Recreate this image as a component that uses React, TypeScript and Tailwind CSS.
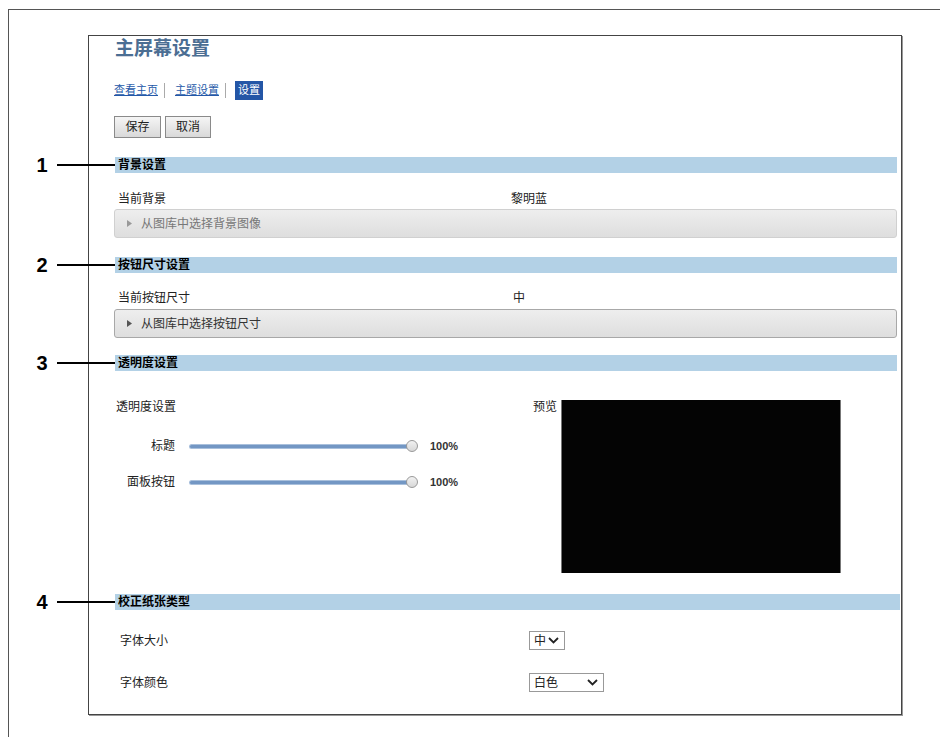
import React from "react";

function Callout({ n }: { n: string }) {
  return (
    <div className="absolute right-full top-1/2 -translate-y-1/2 flex items-center">
      <span className="w-[12px] text-center text-[20px] font-bold leading-none text-black font-['Liberation_Sans',sans-serif]">{n}</span>
      <span className="ml-[9px] w-[58px] h-[2px] bg-black" />
    </div>
  );
}

function Bar({ n, title, wide }: { n: string; title: string; wide?: boolean }) {
  return (
    <div className={`relative ml-[1px] h-[16px] bg-[#b3d1e6] pl-[3px] text-[12px] leading-[16px] font-bold text-black ${wide ? "w-[785px]" : "w-[782px]"}`}>
      <Callout n={n} />
      {title}
    </div>
  );
}

function Accordion({ text, hover }: { text: string; hover?: boolean }) {
  return (
    <div
      className={`h-[29px] w-[783px] rounded-[3px] border bg-gradient-to-b from-[#eeeeee] to-[#dedede] flex items-center pl-[12px] text-[12px] ${
        hover ? "border-[#a8a8a8] text-[#333]" : "border-[#d0d0d0] text-[#777]"
      }`}
    >
      <svg width="5" height="7" viewBox="0 0 5 7" className="mr-[9px]">
        <path d="M0 0 L5 3.5 L0 7 Z" fill={hover ? "#555" : "#999"} />
      </svg>
      {text}
    </div>
  );
}

function Slider({ label }: { label: string }) {
  return (
    <div className="flex items-center h-[16px]">
      <div className="w-[61px] text-right text-[12px] text-[#222]">{label}</div>
      <div className="relative ml-[15px] w-[228px] h-[12px] flex items-center">
        <div className="w-[220px] h-[3px] rounded-full bg-[#7397c4] shadow-[0_0_0_1px_#a9c0dc]" />
        <div className="absolute right-0 top-0 w-[12px] h-[12px] rounded-full border border-[#999] bg-gradient-to-b from-[#f2f2f2] to-[#d8d8d8]" />
      </div>
      <div className="ml-[12px] text-[11px] font-bold text-[#333] font-['Liberation_Sans',sans-serif]">100%</div>
    </div>
  );
}

function Select({ value, width }: { value: string; width: string }) {
  return (
    <div className={`h-[19px] border border-[#999] bg-white flex items-center justify-between pl-[4px] pr-[5px] text-[12px] text-[#222] ${width}`}>
      <span>{value}</span>
      <svg width="11" height="7" viewBox="0 0 11 7">
        <path d="M1 1 L5.5 5.5 L10 1" fill="none" stroke="#222" strokeWidth="1.8" />
      </svg>
    </div>
  );
}

export default function App() {
  return (
    <div className="w-[940px] h-[737px] bg-white overflow-hidden font-['Liberation_Sans','Noto_Sans_CJK_SC',sans-serif]">
      <div className="ml-[8px] mt-[9px] h-[728px] border-l border-t border-[#555] pl-[79px] pt-[25px]">
        <div className="w-[814px] h-[680px] border border-[#444] shadow-[1px_1px_0_#999] pl-[25px] pt-0 flex flex-col">
          {/* Title */}
          <div className="ml-[1px] h-[26px] text-[19px] leading-[26px] font-bold text-[#4b6e93]">主屏幕设置</div>

          {/* Links */}
          <div className="mt-[19px] h-[19px] flex items-center text-[11px]">
            <a className="text-[#2458a8] underline">查看主页</a>
            <span className="ml-[6px] mr-[10px] w-px h-[15px] bg-[#aaa]" />
            <a className="text-[#2458a8] underline">主题设置</a>
            <span className="ml-[6px] mr-[9px] w-px h-[15px] bg-[#aaa]" />
            <span className="h-[19px] px-[3px] bg-[#2456a6] text-white leading-[19px]">设置</span>
          </div>

          {/* Buttons */}
          <div className="mt-[16px] flex gap-[4px]">
            <div className="w-[47px] h-[22px] border border-[#8a8a8a] bg-gradient-to-b from-[#f5f5f5] to-[#d9d9d9] flex items-center justify-center text-[12px] text-[#222]">保存</div>
            <div className="w-[46px] h-[22px] border border-[#8a8a8a] bg-gradient-to-b from-[#f5f5f5] to-[#d9d9d9] flex items-center justify-center text-[12px] text-[#222]">取消</div>
          </div>

          {/* Section 1 */}
          <div className="mt-[19px]">
            <Bar n="1" title="背景设置" />
          </div>
          <div className="mt-[18px] h-[16px] flex items-center pl-[4px] text-[12px] text-[#222]">
            <div className="w-[393px]">当前背景</div>
            <div>黎明蓝</div>
          </div>
          <div className="mt-[2px]">
            <Accordion text="从图库中选择背景图像" />
          </div>

          {/* Section 2 */}
          <div className="mt-[19px]">
            <Bar n="2" title="按钮尺寸设置" />
          </div>
          <div className="mt-[17px] h-[16px] flex items-center pl-[4px] text-[12px] text-[#222]">
            <div className="w-[395px]">当前按钮尺寸</div>
            <div>中</div>
          </div>
          <div className="mt-[3px]">
            <Accordion text="从图库中选择按钮尺寸" hover />
          </div>

          {/* Section 3 */}
          <div className="mt-[17px]">
            <Bar n="3" title="透明度设置" />
          </div>
          <div className="mt-[29px] flex">
            <div className="w-[419px] flex flex-col">
              <div className="h-[14px] leading-[14px] pl-[2px] text-[12px] text-[#222]">透明度设置</div>
              <div className="mt-[24px]">
                <Slider label="标题" />
              </div>
              <div className="mt-[20px]">
                <Slider label="面板按钮" />
              </div>
            </div>
            <div className="w-[24px] h-[14px] leading-[14px] text-[12px] text-[#222]">预览</div>
            <div className="ml-[4px] w-[280px] h-[173px] bg-[#040404] border-x border-[#777]" />
          </div>

          {/* Section 4 */}
          <div className="mt-[21px]">
            <Bar n="4" title="校正纸张类型" wide />
          </div>
          <div className="mt-[21px] flex items-center pl-[6px] text-[12px] text-[#222]">
            <div className="w-[409px]">字体大小</div>
            <Select value="中" width="w-[36px]" />
          </div>
          <div className="mt-[23px] flex items-center pl-[6px] text-[12px] text-[#222]">
            <div className="w-[409px]">字体颜色</div>
            <Select value="白色" width="w-[75px]" />
          </div>
        </div>
      </div>
    </div>
  );
}
